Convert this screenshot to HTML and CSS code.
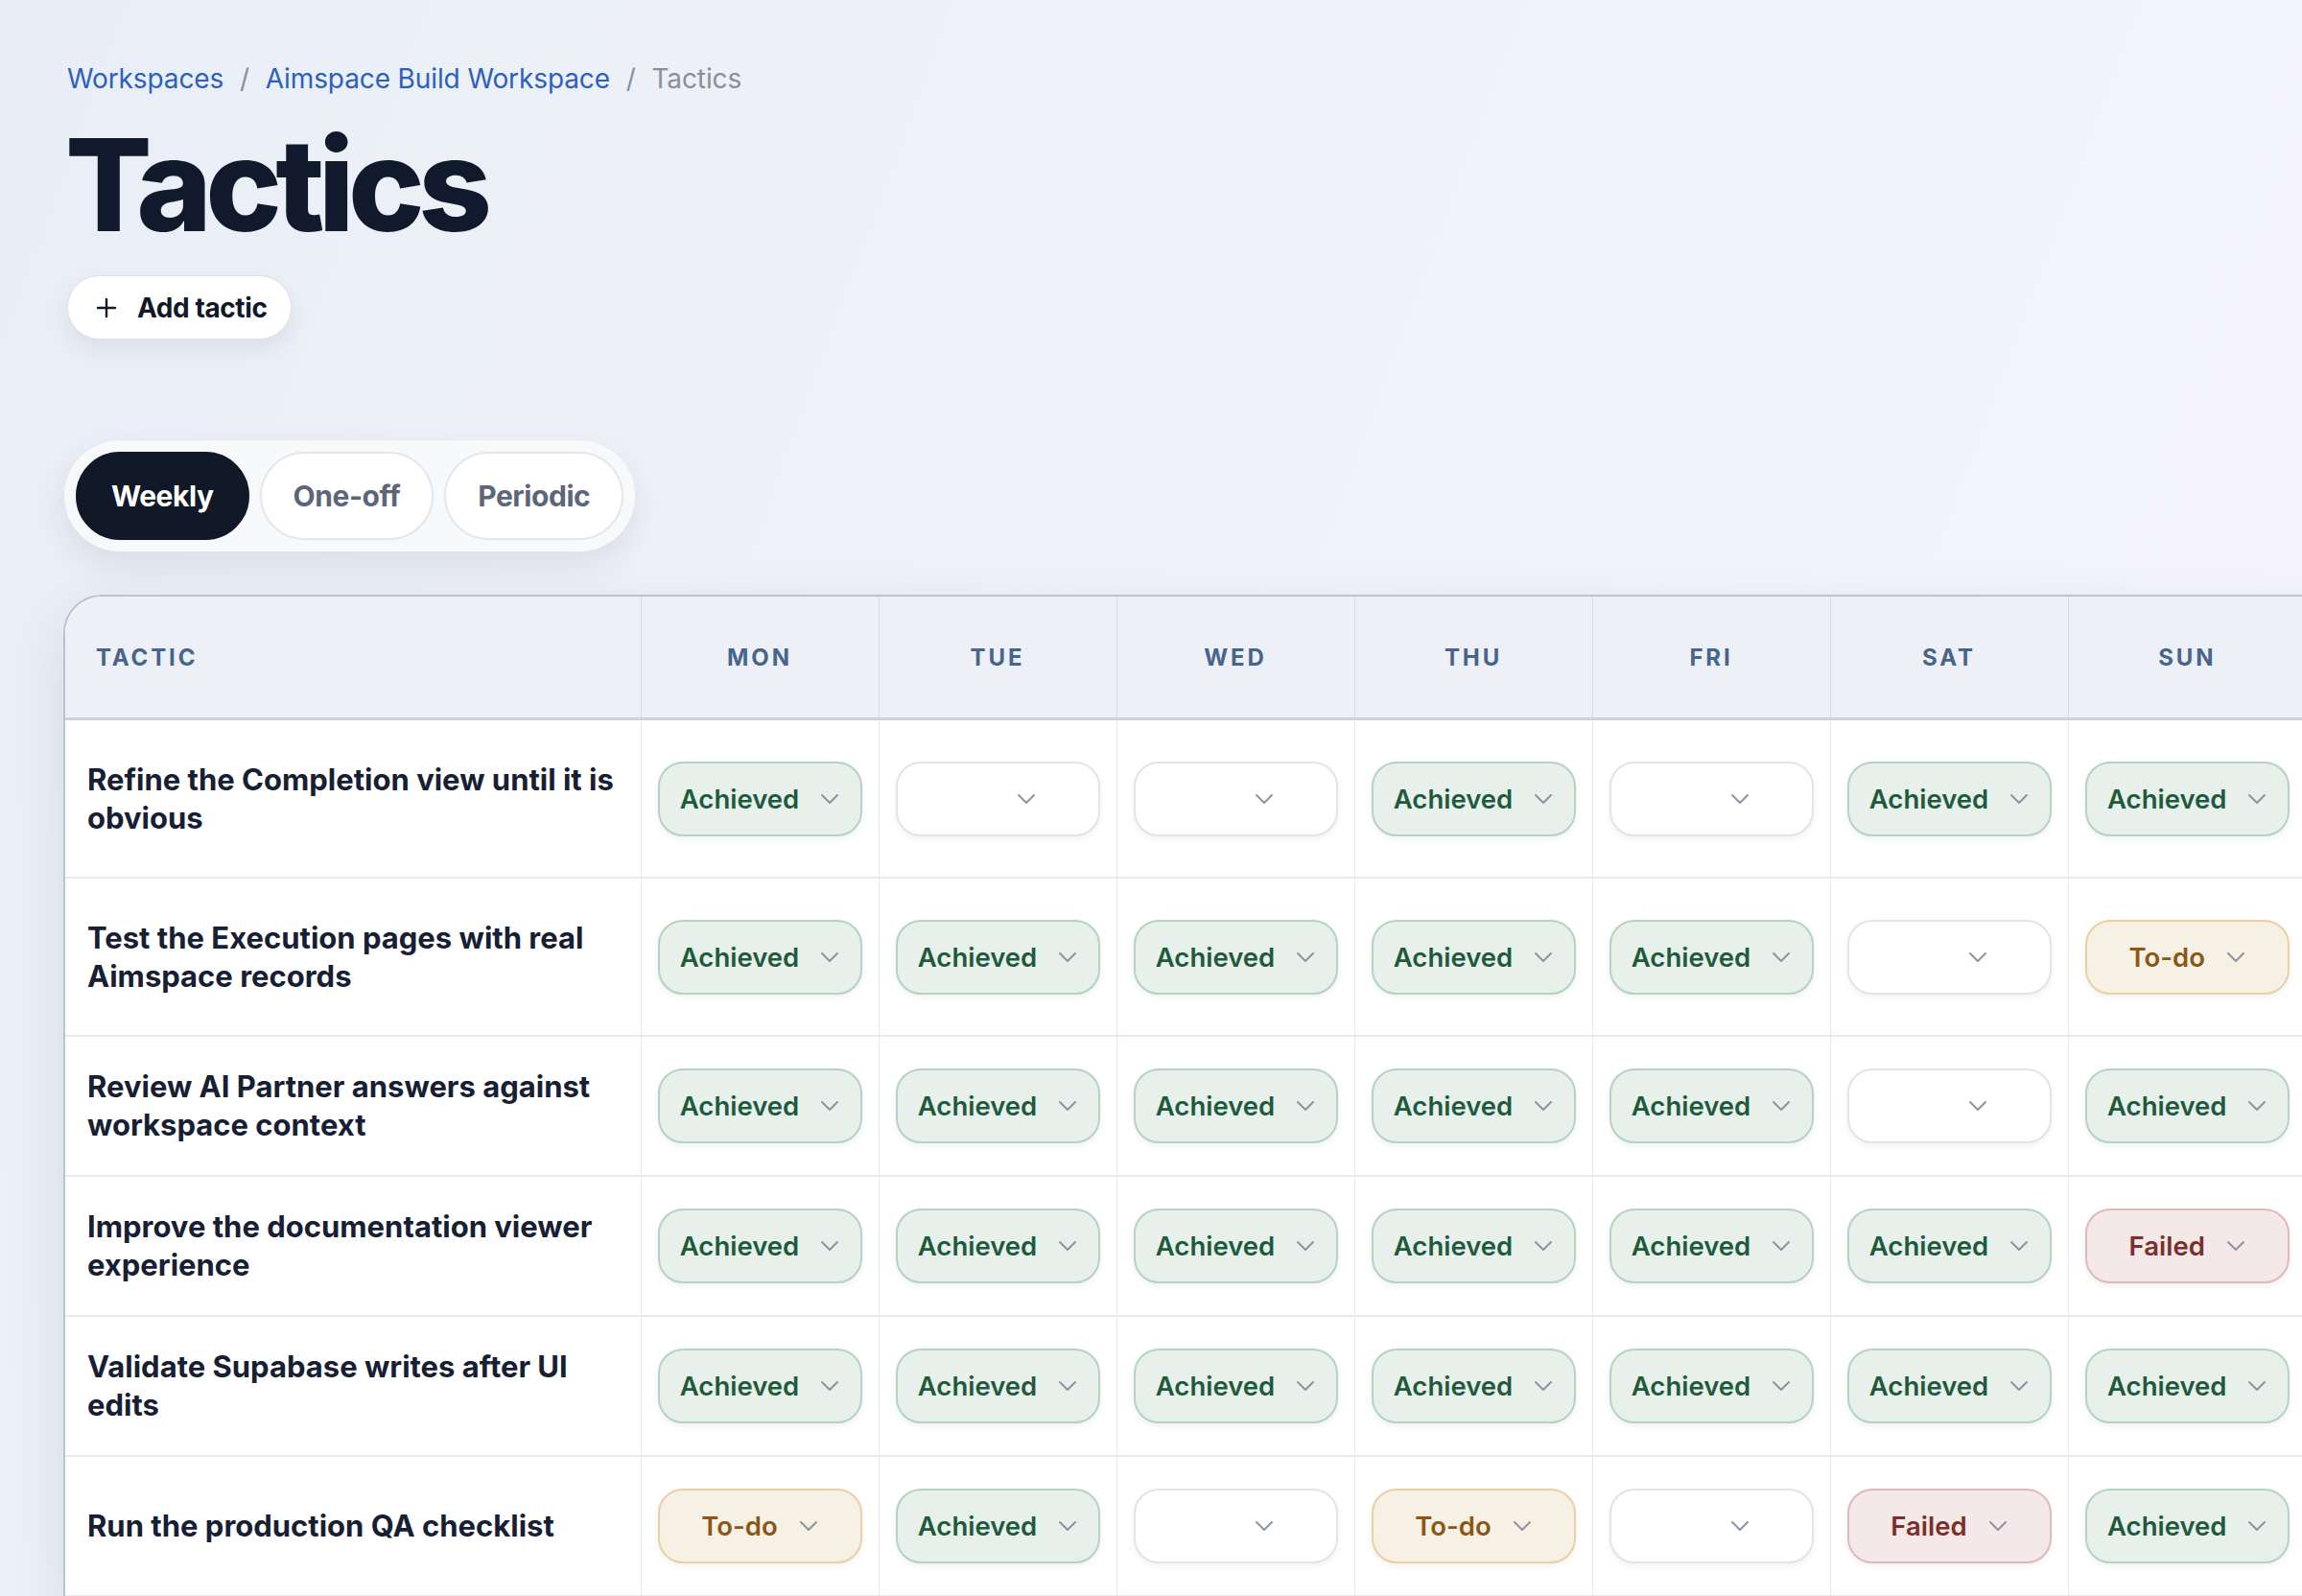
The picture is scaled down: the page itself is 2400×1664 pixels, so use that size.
FILE: index.html
```html
<!DOCTYPE html>
<html lang="en">
   <head>
      <meta charset="UTF-8"/>
      <title>Tactics</title>
      <link rel="stylesheet" href="styles.css">
   </head>

   <body>
      <svg class="iconDefs" aria-hidden="true">
         <symbol id="chevron" viewBox="0 0 20 12">
            <path d="M2 2l8 8 8-8" fill="none" stroke="currentColor" stroke-width="2" stroke-linecap="round" stroke-linejoin="round"/>
         </symbol>
      </svg>

      <div class="page">
         <nav class="breadcrumb">
            <a href="#">Workspaces</a>
            <span class="sep">/</span>
            <a href="#">Aimspace Build Workspace</a>
            <span class="sep">/</span>
            <span class="current">Tactics</span>
         </nav>

         <h1 class="pageTitle">Tactics</h1>

         <button class="addBtn">
            <svg width="22" height="22" viewBox="0 0 22 22"><path d="M11 2v18M2 11h18" stroke="currentColor" stroke-width="2.4" stroke-linecap="round"/></svg>
            Add tactic
         </button>

         <div class="tabs">
            <button class="tab active">Weekly</button>
            <button class="tab">One-off</button>
            <button class="tab">Periodic</button>
         </div>

         <div class="tableCard">
            <table class="tacticTable">
               <colgroup>
                  <col class="colTactic">
                  <col span="7" class="colDay">
               </colgroup>
               <thead>
                  <tr>
                     <th class="thTactic">Tactic</th>
                     <th>Mon</th>
                     <th>Tue</th>
                     <th>Wed</th>
                     <th>Thu</th>
                     <th>Fri</th>
                     <th>Sat</th>
                     <th>Sun</th>
                  </tr>
               </thead>
               <tbody>
                  <tr class="tall">
                     <td class="tacticName">Refine the Completion view until it is obvious</td>
                     <td><button class="status achieved"><span class="label">Achieved</span><svg><use href="#chevron"/></svg></button></td>
                     <td><button class="status"><span class="label"></span><svg><use href="#chevron"/></svg></button></td>
                     <td><button class="status"><span class="label"></span><svg><use href="#chevron"/></svg></button></td>
                     <td><button class="status achieved"><span class="label">Achieved</span><svg><use href="#chevron"/></svg></button></td>
                     <td><button class="status"><span class="label"></span><svg><use href="#chevron"/></svg></button></td>
                     <td><button class="status achieved"><span class="label">Achieved</span><svg><use href="#chevron"/></svg></button></td>
                     <td><button class="status achieved"><span class="label">Achieved</span><svg><use href="#chevron"/></svg></button></td>
                  </tr>
                  <tr class="tall">
                     <td class="tacticName">Test the Execution pages with real Aimspace records</td>
                     <td><button class="status achieved"><span class="label">Achieved</span><svg><use href="#chevron"/></svg></button></td>
                     <td><button class="status achieved"><span class="label">Achieved</span><svg><use href="#chevron"/></svg></button></td>
                     <td><button class="status achieved"><span class="label">Achieved</span><svg><use href="#chevron"/></svg></button></td>
                     <td><button class="status achieved"><span class="label">Achieved</span><svg><use href="#chevron"/></svg></button></td>
                     <td><button class="status achieved"><span class="label">Achieved</span><svg><use href="#chevron"/></svg></button></td>
                     <td><button class="status"><span class="label"></span><svg><use href="#chevron"/></svg></button></td>
                     <td><button class="status todo"><span class="label">To-do</span><svg><use href="#chevron"/></svg></button></td>
                  </tr>
                  <tr>
                     <td class="tacticName">Review AI Partner answers against workspace context</td>
                     <td><button class="status achieved"><span class="label">Achieved</span><svg><use href="#chevron"/></svg></button></td>
                     <td><button class="status achieved"><span class="label">Achieved</span><svg><use href="#chevron"/></svg></button></td>
                     <td><button class="status achieved"><span class="label">Achieved</span><svg><use href="#chevron"/></svg></button></td>
                     <td><button class="status achieved"><span class="label">Achieved</span><svg><use href="#chevron"/></svg></button></td>
                     <td><button class="status achieved"><span class="label">Achieved</span><svg><use href="#chevron"/></svg></button></td>
                     <td><button class="status"><span class="label"></span><svg><use href="#chevron"/></svg></button></td>
                     <td><button class="status achieved"><span class="label">Achieved</span><svg><use href="#chevron"/></svg></button></td>
                  </tr>
                  <tr>
                     <td class="tacticName">Improve the documentation viewer experience</td>
                     <td><button class="status achieved"><span class="label">Achieved</span><svg><use href="#chevron"/></svg></button></td>
                     <td><button class="status achieved"><span class="label">Achieved</span><svg><use href="#chevron"/></svg></button></td>
                     <td><button class="status achieved"><span class="label">Achieved</span><svg><use href="#chevron"/></svg></button></td>
                     <td><button class="status achieved"><span class="label">Achieved</span><svg><use href="#chevron"/></svg></button></td>
                     <td><button class="status achieved"><span class="label">Achieved</span><svg><use href="#chevron"/></svg></button></td>
                     <td><button class="status achieved"><span class="label">Achieved</span><svg><use href="#chevron"/></svg></button></td>
                     <td><button class="status failed"><span class="label">Failed</span><svg><use href="#chevron"/></svg></button></td>
                  </tr>
                  <tr>
                     <td class="tacticName">Validate Supabase writes after UI edits</td>
                     <td><button class="status achieved"><span class="label">Achieved</span><svg><use href="#chevron"/></svg></button></td>
                     <td><button class="status achieved"><span class="label">Achieved</span><svg><use href="#chevron"/></svg></button></td>
                     <td><button class="status achieved"><span class="label">Achieved</span><svg><use href="#chevron"/></svg></button></td>
                     <td><button class="status achieved"><span class="label">Achieved</span><svg><use href="#chevron"/></svg></button></td>
                     <td><button class="status achieved"><span class="label">Achieved</span><svg><use href="#chevron"/></svg></button></td>
                     <td><button class="status achieved"><span class="label">Achieved</span><svg><use href="#chevron"/></svg></button></td>
                     <td><button class="status achieved"><span class="label">Achieved</span><svg><use href="#chevron"/></svg></button></td>
                  </tr>
                  <tr>
                     <td class="tacticName">Run the production QA checklist</td>
                     <td><button class="status todo"><span class="label">To-do</span><svg><use href="#chevron"/></svg></button></td>
                     <td><button class="status achieved"><span class="label">Achieved</span><svg><use href="#chevron"/></svg></button></td>
                     <td><button class="status"><span class="label"></span><svg><use href="#chevron"/></svg></button></td>
                     <td><button class="status todo"><span class="label">To-do</span><svg><use href="#chevron"/></svg></button></td>
                     <td><button class="status"><span class="label"></span><svg><use href="#chevron"/></svg></button></td>
                     <td><button class="status failed"><span class="label">Failed</span><svg><use href="#chevron"/></svg></button></td>
                     <td><button class="status achieved"><span class="label">Achieved</span><svg><use href="#chevron"/></svg></button></td>
                  </tr>
               </tbody>
            </table>
         </div>
      </div>
   </body>
</html>
```

FILE: styles.css
```css
html, body { margin: 0; padding: 0; overflow: hidden; }

body {
   font-family: Inter, "Noto Sans", sans-serif;
   color: #111a2c;
   background: linear-gradient(110deg, #e9eef6 0%, #f0f2f8 45%, #f6f6fb 100%);
   min-height: 1664px;
}

.iconDefs {
   position: absolute;
   width: 0;
   height: 0;
}

.page {
   padding: 64px 0 0 66px;
}

.breadcrumb {
   margin-left: 4px;
   font-size: 28px;
   line-height: 37px;
   letter-spacing: -0.004em;
   color: #8a8f99;
}

.breadcrumb a {
   color: #2c60c0;
   text-decoration: none;
}

.breadcrumb .sep {
   margin: 0 9px;
}

.pageTitle {
   margin: 23px 0 0 2px;
   font-size: 134px;
   line-height: 136px;
   font-weight: 800;
   letter-spacing: -0.05em;
   color: #111a2c;
}

.addBtn {
   display: flex;
   align-items: center;
   gap: 21px;
   margin: 27px 0 0 4px;
   height: 67px;
   padding: 0 25px 0 29px;
   font-family: inherit;
   font-size: 28px;
   font-weight: 700;
   letter-spacing: -0.015em;
   color: #111827;
   background: #fff;
   border: 1.5px solid #dde1e8;
   border-radius: 40px;
   box-shadow: 0 10px 24px rgba(30, 40, 80, 0.08);
}

.tabs {
   display: inline-flex;
   gap: 11px;
   margin: 105px 0 0 1px;
   padding: 12px;
   background: #f8f9fb;
   border-radius: 60px;
   box-shadow: 0 14px 34px rgba(30, 40, 80, 0.09);
}

.tab {
   height: 92px;
   padding: 0 33px;
   font-family: inherit;
   font-size: 30px;
   font-weight: 700;
   letter-spacing: -0.015em;
   color: #5d6679;
   background: #fff;
   border: 2px solid #e4e7eb;
   border-radius: 46px;
}

.tab.active {
   padding: 0 35px;
   color: #fff;
   background: #111827;
   border-color: #111827;
}

.tableCard {
   margin-top: 45px;
   width: 2400px;
   background: #fff;
   border: 2px solid #bcc3cd;
   border-right: none;
   border-bottom: none;
   border-top-left-radius: 40px;
   overflow: hidden;
   box-shadow: 0 20px 60px rgba(30, 40, 80, 0.1);
}

.tacticTable {
   border-collapse: collapse;
   table-layout: fixed;
}

.colTactic { width: 600px; }
.colDay { width: 248px; }

.tacticTable th {
   height: 126px;
   padding: 0;
   font-size: 24px;
   font-weight: 700;
   letter-spacing: 0.12em;
   text-transform: uppercase;
   text-align: center;
   color: #47658a;
   background: #edf1f7;
   border-bottom: 3px solid #cdd3dc;
   border-left: 1.5px solid #d7dde5;
}

.tacticTable th.thTactic {
   padding-left: 32px;
   text-align: left;
   border-left: none;
}

.tacticTable td {
   height: 144px;
   padding: 0 17px;
   border-bottom: 2px solid #e6e9ee;
   border-left: 1.5px solid #e8ebf0;
   vertical-align: middle;
}

.tacticTable tr.tall td {
   height: 163px;
}

.tacticTable td.tacticName {
   padding: 0 12px 0 23px;
   font-size: 31px;
   line-height: 40px;
   font-weight: 700;
   color: #172033;
   border-left: none;
}

.status {
   display: flex;
   align-items: center;
   justify-content: center;
   gap: 22px;
   width: 100%;
   height: 78px;
   padding: 0;
   font-family: inherit;
   font-size: 27.5px;
   font-weight: 600;
   color: #1f5b3c;
   background: #fff;
   border: 2px solid #e1e4e8;
   border-radius: 26px;
   box-shadow: 0 3px 6px rgba(20, 30, 50, 0.06);
}

.status .label {
   min-width: 38px;
}

.status svg {
   width: 20px;
   height: 12px;
   color: #8b94a3;
}

.status.achieved {
   color: #1e5a3b;
   background: #e7f0eb;
   border-color: #b5d2c3;
}

.status.todo {
   color: #8a5717;
   background: #f7f0e5;
   border-color: #ead0a4;
}

.status.failed {
   color: #7b2e2b;
   background: #f5e8e8;
   border-color: #dfbaba;
}
```
